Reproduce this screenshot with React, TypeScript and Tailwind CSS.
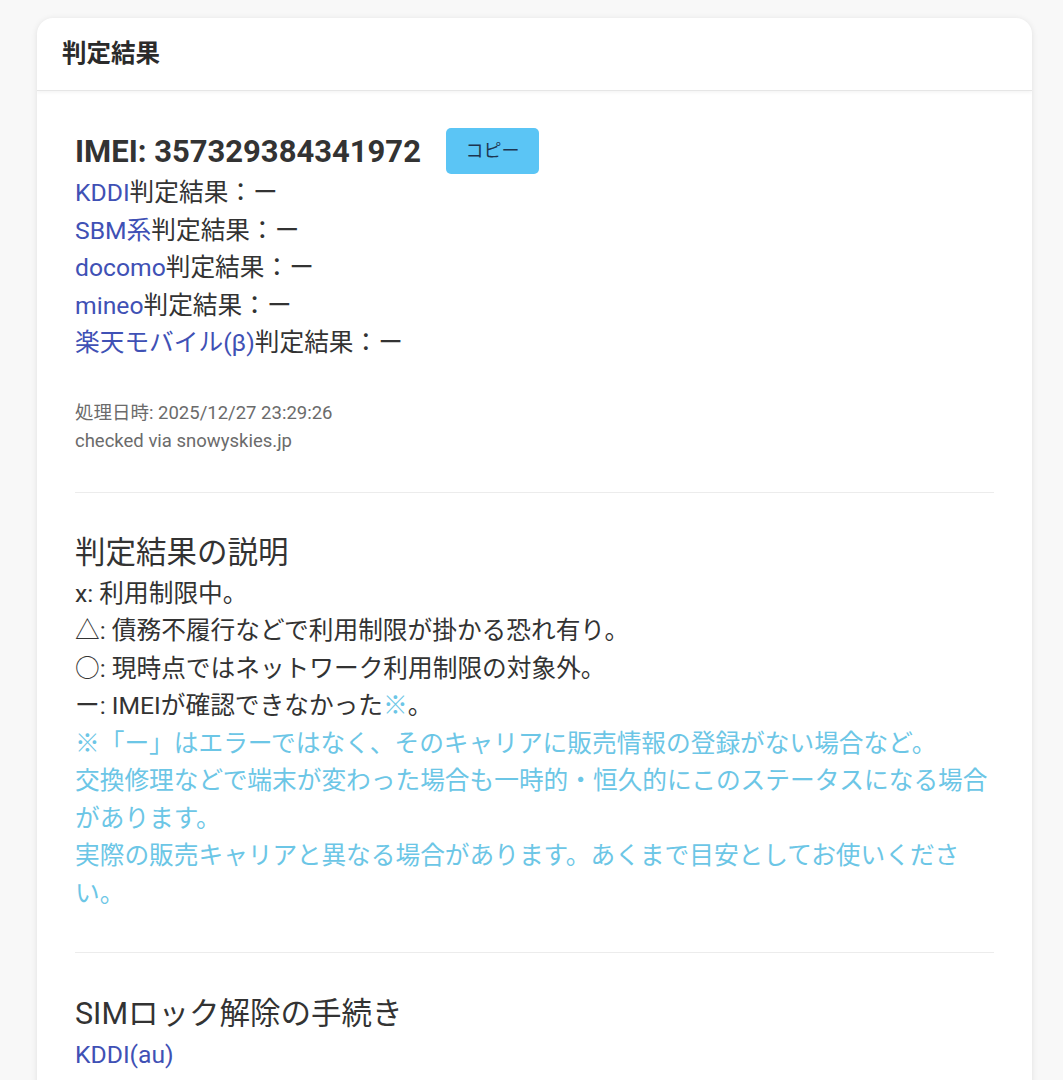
const font = { fontFamily: "Roboto, 'Noto Sans CJK JP', sans-serif" }

const carriers = ['KDDI', 'SBM系', 'docomo', 'mineo', '楽天モバイル(β)']

const legend = [
  'x: 利用制限中。',
  '△: 債務不履行などで利用制限が掛かる恐れ有り。',
  '○: 現時点ではネットワーク利用制限の対象外。',
]

function Divider({ className = 'my-[37px]' }: { className?: string }) {
  return <div className={`h-px bg-[#ececec] ${className}`} />
}

export default function App() {
  return (
    <div className="h-[1080px] overflow-hidden bg-[#f8f8f8] pt-[18px]" style={font}>
      <div className="mx-[37px] w-[995px] overflow-hidden rounded-[16px] bg-white shadow-[0_1px_6px_rgba(0,0,0,0.1)]">
        <div className="border-b border-[#e6e6e6] px-[25px] py-[18px] shadow-[0_2px_3px_rgba(0,0,0,0.04)]">
          <h1 className="text-[24.5px] font-bold leading-[36px] text-[#2b2b2b]">判定結果</h1>
        </div>

        <div className="px-[38px] pt-[37px] pb-[24px] text-[24.7px] leading-[37.5px] text-[#333]">
          <div className="flex items-center gap-[25px]">
            <h2 className="text-[31px] font-bold leading-[45px] text-[#333]">IMEI: 357329384341972</h2>
            <button className="h-[46px] w-[93px] rounded-[5px] bg-[#5bc5f5] text-[18px] text-[#1d3550]">
              コピー
            </button>
          </div>
          <div>
            {carriers.map((c) => (
              <p key={c}>
                <span className="text-[#3f51b5]">{c}</span>判定結果：ー
              </p>
            ))}
          </div>

          <div className="mt-[37px] text-[18.5px] leading-[28px] text-[#6b6b6b]">
            <p>処理日時: 2025/12/27 23:29:26</p>
            <p>checked via snowyskies.jp</p>
          </div>

          <Divider />

          <h3 className="text-[30.5px] leading-[45px] text-[#333]">判定結果の説明</h3>
          {legend.map((l) => (
            <p key={l}>{l}</p>
          ))}
          <p>
            ー: IMEIが確認できなかった<span className="text-[#6cc6e6]">※</span>。
          </p>
          <div className="text-[#6cc6e6]">
            <p>※「ー」はエラーではなく、そのキャリアに販売情報の登録がない場合など。</p>
            <p>交換修理などで端末が変わった場合も一時的・恒久的にこのステータスになる場合があります。</p>
            <p>実際の販売キャリアと異なる場合があります。あくまで目安としてお使いください。</p>
          </div>

          <Divider className="mt-[40px] mb-[38px]" />

          <h3 className="text-[30.5px] leading-[45px] text-[#333]">SIMロック解除の手続き</h3>
          <p className="text-[#3f51b5]">KDDI(au)</p>
        </div>
      </div>
    </div>
  )
}
